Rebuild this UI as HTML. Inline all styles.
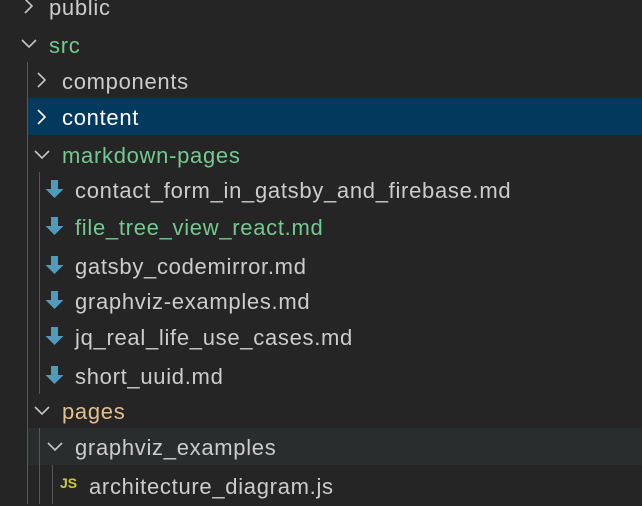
<!DOCTYPE html><html><head><style>
body{margin:0;width:642px;height:504px;background:#252526;overflow:hidden;position:relative;font-family:"Liberation Sans",sans-serif;font-size:22px;letter-spacing:0.7px;color:#cccccc}
.r{position:absolute;left:0;width:642px;height:37px;line-height:39px;white-space:nowrap}
.t{position:absolute;top:0}
.g{position:absolute;width:1px;background:#585858}
svg{position:absolute}
</style></head><body>
<div class="r" style="top:98px;left:28px;width:614px;background:#04395e"></div>
<div class="r" style="top:428px;left:28px;width:614px;background:#2a2d2e"></div>
<div class="g" style="left:27px;top:62px;height:442px"></div>
<div class="g" style="left:39px;top:172px;height:222px"></div>
<div class="g" style="left:39px;top:428px;height:76px"></div>
<div class="g" style="left:52px;top:465px;height:39px"></div>

<svg width="642" height="504" style="left:0;top:0" fill="none" stroke="#c5c5c5" stroke-width="1.6">
<path d="M25 -1 L32 6 L25 13"/>
<path d="M22 40 L29 47 L36 40"/>
<path d="M38 73 L45 80 L38 87"/>
<path d="M38 110 L45 117 L38 124" stroke="#fff"/>
<path d="M35 151 L42 158 L49 151"/>
<path d="M35 407 L42 414 L49 407"/>
<path d="M48 443 L55 450 L62 443"/>
</svg>
<svg width="642" height="504" style="left:0;top:0" fill="#519aba">
<path id="a" d="M51 180 H58 V189 H63.5 L54.5 198 L45.5 189 H51 Z"/>
<use href="#a" y="37"/><use href="#a" y="76"/><use href="#a" y="111"/><use href="#a" y="147"/><use href="#a" y="186"/>
</svg>

<div class="r" style="top:-12px"><span class="t" style="left:49px">public</span></div>
<div class="r" style="top:26px;color:#73c991"><span class="t" style="left:49px">src</span></div>
<div class="r" style="top:62px"><span class="t" style="left:62px">components</span></div>
<div class="r" style="top:98px;color:#fff"><span class="t" style="left:62px">content</span></div>
<div class="r" style="top:136px;color:#73c991"><span class="t" style="left:62px">markdown-pages</span></div>
<div class="r" style="top:171px"><span class="t" style="left:75px">contact_form_in_gatsby_and_firebase.md</span></div>
<div class="r" style="top:208px;color:#73c991"><span class="t" style="left:75px">file_tree_view_react.md</span></div>
<div class="r" style="top:247px"><span class="t" style="left:75px">gatsby_codemirror.md</span></div>
<div class="r" style="top:282px"><span class="t" style="left:75px">graphviz-examples.md</span></div>
<div class="r" style="top:318px"><span class="t" style="left:75px">jq_real_life_use_cases.md</span></div>
<div class="r" style="top:357px"><span class="t" style="left:75px">short_uuid.md</span></div>
<div class="r" style="top:392px;color:#e2c08d"><span class="t" style="left:62px">pages</span></div>
<div class="r" style="top:428px"><span class="t" style="left:75px">graphviz_examples</span></div>
<div class="r" style="top:467px"><span class="t" style="left:60px;font-size:14px;letter-spacing:0;font-weight:bold;color:#cbcb41;top:-3px">JS</span><span class="t" style="left:89px">architecture_diagram.js</span></div>
</body></html>
